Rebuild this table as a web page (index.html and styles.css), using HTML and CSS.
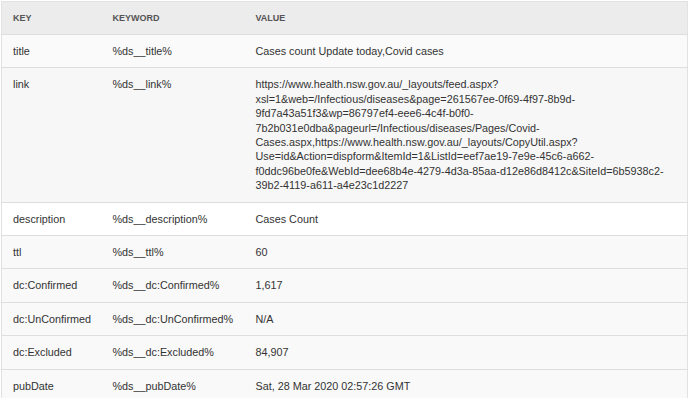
FILE: index.html
```html
<!DOCTYPE html>
<html>
<head>
<meta charset="utf-8">
<link rel="stylesheet" href="styles.css">
</head>
<body>
<div class="wrap">
<table class="kv">
  <colgroup><col class="c1"><col class="c2"><col class="c3"></colgroup>
  <thead>
    <tr><th>Key</th><th>Keyword</th><th>Value</th></tr>
  </thead>
  <tbody>
    <tr class="r-a"><td>title</td><td>%ds__title%</td><td>Cases count Update today,Covid cases</td></tr>
    <tr class="r-b"><td>link</td><td>%ds__link%</td><td>https://www.health.nsw.gov.au/_layouts/feed.aspx?<br>xsl=1&amp;web=/Infectious/diseases&amp;page=261567ee-0f69-4f97-8b9d-<br>9fd7a43a51f3&amp;wp=86797ef4-eee6-4c4f-b0f0-<br>7b2b031e0dba&amp;pageurl=/Infectious/diseases/Pages/Covid-<br>Cases.aspx,https://www.health.nsw.gov.au/_layouts/CopyUtil.aspx?<br>Use=id&amp;Action=dispform&amp;ItemId=1&amp;ListId=eef7ae19-7e9e-45c6-a662-<br>f0ddc96be0fe&amp;WebId=dee68b4e-4279-4d3a-85aa-d12e86d8412c&amp;SiteId=6b5938c2-<br>39b2-4119-a611-a4e23c1d2227</td></tr>
    <tr class="r-w"><td>description</td><td>%ds__description%</td><td>Cases Count</td></tr>
    <tr class="r-c"><td>ttl</td><td>%ds__ttl%</td><td>60</td></tr>
    <tr class="r-c"><td>dc:Confirmed</td><td>%ds__dc:Confirmed%</td><td>1,617</td></tr>
    <tr class="r-c"><td>dc:UnConfirmed</td><td>%ds__dc:UnConfirmed%</td><td>N/A</td></tr>
    <tr class="r-c"><td>dc:Excluded</td><td>%ds__dc:Excluded%</td><td>84,907</td></tr>
    <tr class="r-c"><td>pubDate</td><td>%ds__pubDate%</td><td>Sat, 28 Mar 2020 02:57:26 GMT</td></tr>
  </tbody>
</table>
</div>
</body>
</html>
```
FILE: styles.css
```css
html, body {
  margin: 0;
  padding: 0;
  background: #fff;
}
body {
  font-family: "Liberation Sans", Arial, sans-serif;
  font-size: 10.8px;
  color: #333;
}
.wrap {
  padding: 1px 0 0 1px;
  width: 688px;
}
.kv {
  width: 687px;
  border-collapse: collapse;
  border: 1px solid #e2e2e2;
  table-layout: fixed;
}
.c1 { width: 100px; }
.c2 { width: 143px; }
.kv th {
  background: #ececec;
  text-align: left;
  font-weight: bold;
  font-size: 9px;
  text-transform: uppercase;
  color: #555;
  padding: 0 11px;
  height: 32px;
  border-bottom: 1px solid #dedede;
}
.kv td {
  padding: 9px 11px;
  line-height: 14.4px;
  vertical-align: top;
  border-top: 1px solid #dedede;
}
.r-a td { background: #fafafa; }
.r-b td { background: #f7f7f7; }
.r-w td { background: #fff; }
.r-c td { background: #f9f9f9; }
```
